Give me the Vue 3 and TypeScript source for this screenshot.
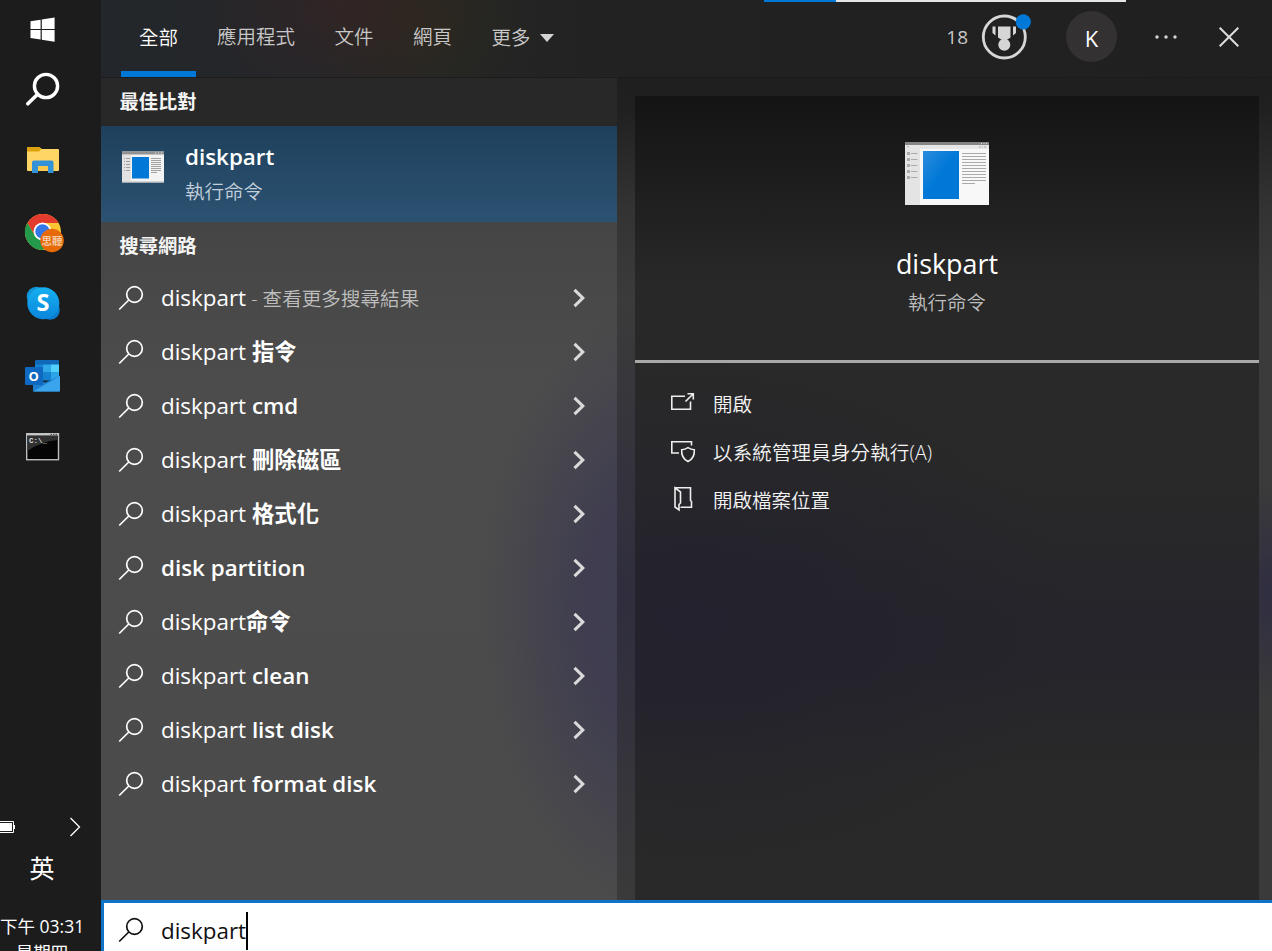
<script setup lang="ts">
interface Suggestion {
  plain: string
  bold: string
  note?: string
}

const tabs: string[] = ['全部', '應用程式', '文件', '網頁']

const suggestions: Suggestion[] = [
  { plain: 'diskpart', bold: '', note: ' - 查看更多搜尋結果' },
  { plain: 'diskpart ', bold: '指令' },
  { plain: 'diskpart ', bold: 'cmd' },
  { plain: 'diskpart ', bold: '刪除磁區' },
  { plain: 'diskpart ', bold: '格式化' },
  { plain: '', bold: 'disk partition' },
  { plain: 'diskpart', bold: '命令' },
  { plain: 'diskpart ', bold: 'clean' },
  { plain: 'diskpart ', bold: 'list disk' },
  { plain: 'diskpart ', bold: 'format disk' },
]
</script>

<template>
  <div class="screen">
    <aside class="taskbar">
      <svg class="tb-icon win" width="26" height="26" viewBox="0 0 26 26">
        <path d="M0.5 4.2 10.6 2.7V12H0.5zM11.8 2.5 24.6 0.6V12H11.8zM0.5 13.1H10.6V22.5L0.5 21.1zM11.8 13.1H24.6V24.8L11.8 22.8z" fill="#fff" />
      </svg>
      <svg class="tb-icon find" width="36" height="36" viewBox="0 0 36 36" fill="none" stroke="#fff">
        <circle cx="21" cy="14" r="11.6" stroke-width="3.4" />
        <path d="M12.6 22.2 2.8 31.8" stroke-width="3.6" stroke-linecap="round" />
      </svg>
      <svg class="tb-icon folder" width="34" height="28" viewBox="0 0 34 28">
        <path d="M1 2q0-1 1-1h11l3 2h16q1 0 1 1v20q0 1-1 1H2q-1 0-1-1z" fill="#ffd665" />
        <path d="M1 2q0-1 1-1h11l2.400 2L13 5.400H1z" fill="#dda10d" />
        <path d="M6 16.500q0-2 2-2h17.500q2 0 2 2V27H22v-7H12v7H6z" fill="#3292d8" />
        <path d="M12 20h10v4.800H12z" fill="#f8c84b" />
      </svg>
      <svg class="tb-icon chrome" width="40" height="40" viewBox="0 0 40 40">
        <circle cx="19" cy="19" r="18" fill="#fbc534" />
        <path d="M19 10h15.600A18 18 0 0 0 3.400 10L11 23z" fill="#e33b2e" />
        <path d="M3.400 10A18 18 0 0 0 19 37l8-13-8 4-8-5z" fill="#239a4b" />
        <circle cx="18.500" cy="18.500" r="9" fill="#fff" />
        <circle cx="18.500" cy="18.500" r="7.200" fill="#3478e8" />
        <circle cx="28" cy="27.500" r="11.800" fill="#e66b08" />
        <text x="28" y="31.500" text-anchor="middle" font-size="10.500" font-weight="700" fill="#f7c9a3" font-family="Noto Sans CJK TC">思聽</text>
      </svg>
      <svg class="tb-icon skype" width="36" height="36" viewBox="0 0 36 36">
        <defs>
          <linearGradient id="cloud" x1="0" y1="0" x2="0" y2="1">
            <stop offset="0" stop-color="#16b0f0" /><stop offset="1" stop-color="#0a86dc" />
          </linearGradient>
        </defs>
        <circle cx="10.500" cy="10.500" r="9.800" fill="#1294d8" />
        <circle cx="24" cy="24" r="9.800" fill="#0a7dd0" />
        <circle cx="17.300" cy="17.300" r="16" fill="url(#cloud)" />
        <text x="17" y="25" text-anchor="middle" font-size="23.500" font-weight="700" fill="#fff" font-family="Open Sans">S</text>
      </svg>
      <svg class="tb-icon outlook" width="38" height="34" viewBox="0 0 38 34">
        <path d="M11 2q0-1 1-1h22q1 0 1 1v18H11z" fill="#1068b8" />
        <path d="M11 5.500h8v8h-8z" fill="#1482d0" />
        <path d="M19 5.500h8v8h-8z" fill="#30a8e8" />
        <path d="M27 5.500h8v8h-8z" fill="#50d0fa" />
        <path d="M19 13.500h8v8h-8z" fill="#1482d0" />
        <path d="M27 13.500h8v8h-8z" fill="#2ca5e8" />
        <path d="M9 18 21 23.500 36 17V31.500q0 1-1 1H10q-1 0-1-1z" fill="#1c7fd0" />
        <path d="M9 32.500 36 17V31.500q0 1-1 1z" fill="#3aa4ec" />
        <rect x="1" y="8" width="18" height="18" rx="1.300" fill="#0f69c3" />
        <text x="9.700" y="21.500" text-anchor="middle" font-size="13" font-weight="700" fill="#fff" font-family="Open Sans">O</text>
      </svg>
      <svg class="tb-icon cmd" width="34" height="28" viewBox="0 0 34 28">
        <rect x="0.700" y="0.700" width="31.800" height="26" fill="#050505" stroke="#bdbdbd" stroke-width="1.400" />
        <path d="M1.400 2H32v5Q16 8 1.400 18z" fill="#303030" />
        <path d="M1 1.500H32" stroke="#c9c9c9" stroke-width="1.800" />
        <path d="M24.500 1.400h1.500m1 0h1.500m1 0h1.500" stroke="#444" />
        <text x="3" y="10" font-size="7.500" font-weight="700" fill="#ddd" font-family="Liberation Mono">C:\_</text>
      </svg>
      <div class="tray">
        <svg width="16" height="14" viewBox="0 0 16 14">
          <path d="M-1 1.500H13.500V12.500H-1M14.500 5v4" fill="none" stroke="#fff" />
          <path d="M0 3h12v8H0z" fill="#fff" />
        </svg>
        <svg width="14" height="20" viewBox="0 0 14 20">
          <path d="M1.500 1 10.500 10 1.500 19" fill="none" stroke="#fff" stroke-width="1.300" />
        </svg>
      </div>
      <div class="ime">英</div>
      <div class="clock">下午 03:31</div>
      <div class="day">星期四</div>
    </aside>

    <main class="flyout">
      <header class="topbar">
        <nav class="tabs">
          <span v-for="(tab, i) in tabs" :key="tab" class="tab" :class="{ active: i === 0 }">{{ tab }}</span>
          <span class="tab more">更多<i class="caret"></i></span>
        </nav>
        <div class="progress"><i></i></div>
        <div class="account">
          <span class="points">18</span>
          <svg class="medal" width="50" height="50" viewBox="0 0 50 50">
            <circle cx="23.300" cy="25" r="21" fill="none" stroke="#d6d6d6" stroke-width="2.800" />
            <path d="M17 14.500H29.500V25.500L26 27.700H20.500L17 25.500z" fill="#d6d6d6" />
            <circle cx="23.300" cy="32.800" r="6" fill="#d6d6d6" />
            <path d="M11.500 14.500h3v9l-3-2.500zM32 14.500h3v6.500l-3 2.500z" fill="#d6d6d6" />
            <circle cx="42.300" cy="9.800" r="7.600" fill="#0078d7" />
          </svg>
          <span class="avatar">K</span>
          <svg class="dots" width="24" height="6" viewBox="0 0 24 6" fill="#d6d6d6">
            <circle cx="3" cy="3" r="1.700" /><circle cx="12" cy="3" r="1.700" /><circle cx="21" cy="3" r="1.700" />
          </svg>
          <svg class="close" width="22" height="22" viewBox="0 0 22 22">
            <path d="M1.700 1.700 20.300 20.300M20.300 1.700 1.700 20.300" stroke="#ddd" stroke-width="2" />
          </svg>
        </div>
      </header>

      <div class="body">
        <section class="results">
          <h2 class="heading first">最佳比對</h2>
          <div class="best">
            <svg width="42" height="32" viewBox="0 0 42 32">
              <rect width="42" height="31" y="0.500" fill="#f3f3f3" />
              <path d="M0 4h9v26H0z" fill="#e2e2e2" />
              <path d="M0 0.500h42v3H0z" fill="#929292" />
              <path d="M0 31H42" stroke="#b5b5b5" />
              <path d="M33 2h1m2 0h1m2 0h1" stroke="#eee" />
              <rect x="10" y="6" width="17" height="21.500" fill="#0078d7" />
              <path d="M2 7.500h1m1 0h4M2 10.500h1m1 0h4M2 13.500h1m1 0h4M2 16.500h1m1 0h4M2 19.500h1m1 0h4M29 7.500h10M29 9.500h10M29 11.500h10M29 13.500h10M29 15.500h10M29 17.500h10M29 19.500h10M29 21.500h6" stroke="#a0a0a0" />
            </svg>
            <div class="best-text">
              <b>diskpart</b>
              <span>執行命令</span>
            </div>
          </div>
          <h2 class="heading">搜尋網路</h2>
          <ul class="list">
            <li v-for="(s, i) in suggestions" :key="i" class="row">
              <svg class="glass" width="26" height="26" viewBox="0 0 26 26" fill="none" stroke="#fff" stroke-width="1.700">
                <circle cx="16.500" cy="9.500" r="7.800" /><path d="M10.800 15 1.200 24.500" />
              </svg>
              <span class="query">{{ s.plain }}<b v-if="s.bold">{{ s.bold }}</b><small v-if="s.note">{{ s.note }}</small></span>
              <svg class="chev" width="14" height="20" viewBox="0 0 14 20">
                <path d="M2.500 1.800 10.800 10 2.500 18.200" fill="none" stroke="#dadada" stroke-width="3.100" />
              </svg>
            </li>
          </ul>
        </section>

        <section class="side">
          <div class="card">
            <div class="hero">
              <svg width="84" height="63" viewBox="0 0 84 63">
                <defs>
                  <linearGradient id="sheet" x1="0" y1="0" x2="1" y2="1">
                    <stop offset="0" stop-color="#2a8cdc" /><stop offset="0.500" stop-color="#0078d7" />
                  </linearGradient>
                </defs>
                <rect width="84" height="63" fill="#f8f8f8" />
                <path d="M0 7h15v56H0z" fill="#e4e4e4" />
                <path d="M0 3h84v4H0z" fill="#e6e6e6" />
                <path d="M0 0h84v3H0z" fill="#858585" />
                <path d="M76 1.500h1m1.500 0h1m1.500 0h1" stroke="#ddd" />
                <path d="M2 4.800h2M74 5h2m1 0h1m1 0h2" stroke="#aaa" />
                <rect x="18" y="9" width="36" height="48" fill="url(#sheet)" />
                <path d="M2 11.500h3M2 17.500h3M2 23.500h3M2 29.500h3M2 35.500h3" stroke="#aaa" stroke-width="3" />
                <path d="M6 11.500h6.500M6 17.500h6.500M6 23.500h6.500M6 29.500h6.500M6 35.500h6.500M57 11.500h24M57 14.500h24M57 17.500h24M57 20.500h24M57 23.500h24M57 26.500h24M57 29.500h24M57 32.500h24M57 35.500h24M57 38.500h24M57 41.500h13" stroke="#aaa" />
              </svg>
              <h1>diskpart</h1>
              <p>執行命令</p>
            </div>
            <ul class="actions">
              <li>
                <svg width="26" height="24" viewBox="0 0 26 24" fill="none" stroke="#eee" stroke-width="1.600">
                  <path d="M15 4.300H1.800v13h18.700V9.500M15.500 9.500 22.500 2.500M17.500 1.800h5.800V7.500" />
                </svg>
                <span>開啟</span>
              </li>
              <li>
                <svg width="26" height="24" viewBox="0 0 26 24" fill="none" stroke="#eee" stroke-width="1.600">
                  <path d="M9 13H1.800V1.800H21.500V5.500" />
                  <path d="M18 7.700q3 2 6.300 2Q25 18 18 21.500q-7-3.500-6.300-11.800 3.300 0 6.300-2z" />
                </svg>
                <span class="admin">以系統管理員身分執行(A)</span>
              </li>
              <li>
                <svg class="place" width="26" height="26" viewBox="0 0 26 26" fill="none" stroke="#eee" stroke-width="1.600">
                  <path d="M5 1.800H20.500V14.500l1 1v5.700H10.500M5 1.800V21l4 3V18.500l1.500-1.500V6z" />
                </svg>
                <span>開啟檔案位置</span>
              </li>
            </ul>
          </div>
        </section>
      </div>

      <footer class="searchbox">
        <svg class="glass" width="26" height="26" viewBox="0 0 26 26" fill="none" stroke="#111" stroke-width="1.700">
          <circle cx="16.500" cy="9.500" r="7.800" /><path d="M10.800 15 1.200 24.500" />
        </svg>
        <span class="typed">diskpart</span><i class="cursor"></i>
      </footer>
    </main>
  </div>
</template>

<style>
html, body { margin: 0; overflow: hidden; background: #1c1c1c; }
</style>

<style scoped>
* { box-sizing: border-box; }
.screen { display: flex; width: 1272px; height: 951px; overflow: hidden; color: #fff; font-family: "Open Sans", "Noto Sans CJK TC", sans-serif; }
h1, h2, p, ul { margin: 0; padding: 0; font-weight: 400; list-style: none; }
svg { display: block; flex: none; }
.taskbar { width: 101px; height: 951px; flex: none; background: #1c1c1c; display: flex; flex-direction: column; overflow: hidden; }
.tb-icon { margin-left: 25px; }
.win { margin-left: 30px; margin-top: 17px; }
.find { margin-top: 29px; margin-left: 25px; }
.folder { margin-top: 38px; margin-left: 26px; }
.chrome { margin-top: 39px; margin-left: 24px; }
.skype { margin-top: 33px; margin-left: 26px; }
.outlook { margin-top: 37px; margin-left: 24px; }
.cmd { margin-top: 40px; margin-left: 25.500px; }
.tray { margin-top: 356px; height: 20px; display: flex; align-items: center; justify-content: space-between; padding-right: 18px; }
.ime { margin-top: 17px; width: 84px; height: 28px; line-height: 28px; text-align: center; font-size: 25px; }
.clock { margin-top: 32px; height: 24px; line-height: 24px; font-size: 17.500px; white-space: nowrap; width: 84px; text-align: center; }
.day { width: 84px; margin-top: 1px; height: 26px; line-height: 26px; text-align: center; font-size: 17.500px; white-space: nowrap; flex: none; }

.flyout { flex: 1; min-width: 0; display: flex; flex-direction: column; }
.topbar { height: 78px; position: relative; display: flex; justify-content: space-between; font-family: "Noto Sans CJK TC", sans-serif;
  background: radial-gradient(ellipse 150px 110px at 240px 0, rgba(70, 30, 30, .35), transparent), radial-gradient(ellipse 120px 110px at 325px 20px, rgba(54, 48, 14, .3), transparent), linear-gradient(90deg, #23262a 0, #25272a 240px, #222 500px, #202020 100%); border-bottom: 1px solid #1c1c1c; }
.tabs { display: flex; padding-left: 20px; }
.tab { height: 77px; line-height: 71px; font-size: 19.500px; font-weight: 350; color: #c8c8c8; margin-right: 39.500px; }
.tab.active { width: 75px; line-height: 73px; text-align: center; color: #fff; border-bottom: 6px solid #0078d7; margin-right: 21px; }
.more { display: flex; align-items: center; height: 73px; }
.caret { margin-left: 9px; margin-top: 2px; border: 7.500px solid transparent; border-top: 8px solid #d4d4d4; border-bottom: 0; }
.progress { position: absolute; left: 663px; top: 0; width: 362px; height: 2px; background: #e6e6e6; }
.progress i { display: block; height: 2px; width: 72px; background: #0078d7; }
.account { display: flex; align-items: center; padding-right: 32px; height: 74px; }
.points { font-family: "Open Sans", sans-serif; font-size: 19px; color: #c8c8c8; font-weight: 400; }
.medal { margin-left: 13px; }
.avatar { margin-left: 35px; margin-top: -2px; width: 51px; height: 51px; border-radius: 50%; background: #343132; text-align: center; font: 400 22px/54px "Open Sans", sans-serif; }
.dots { margin-left: 37px; }
.close { margin-left: 40px; }

.body { display: flex; height: 822px; }
.results { width: 516px; flex: none; background: radial-gradient(ellipse 170px 300px at 550px 530px, rgba(60, 58, 80, .85) 0, rgba(60, 58, 80, .8) 40%, transparent), linear-gradient(#3c3c3c 0, #464646 160px, #4c4c4c 300px, #4b4b4b 100%); }
.heading { height: 48px; line-height: 46px; padding-left: 18.500px; font-family: "Noto Sans CJK TC", sans-serif; font-size: 19.300px; font-weight: 700; color: #f4f4f4; }
.heading.first { background: #282828; }
.best { height: 96px; display: flex; padding: 25px 0 0 21px; background: linear-gradient(#1e405c, #2c5272); }
.best-text { margin-left: 21px; margin-top: -12px; display: flex; flex-direction: column; }
.best-text b { font-weight: 600; font-size: 22.400px; line-height: 36px; }
.best-text span { font-family: "Noto Sans CJK TC", sans-serif; font-size: 19.500px; font-weight: 350; line-height: 31px; color: #c3d0da; }
.list { margin-top: 1px; }
.row { height: 54px; display: flex; align-items: center; padding: 0 31px 0 17px; }
.glass { margin-top: -1px; }
.query { flex: 1; margin-left: 17px; font-size: 22.400px; line-height: 30px; white-space: pre; }
.query b { font-weight: 600; }
.query small { font-size: 19.600px; font-weight: 350; color: #bebebe; }

.side { flex: 1; padding: 18px 13px 0 18px; background: radial-gradient(ellipse 200px 300px at 0 520px, rgba(46, 44, 62, .9), transparent), radial-gradient(ellipse 60px 110px at 100% 515px, rgba(46, 44, 66, .9), transparent), linear-gradient(#1f1f1f 0, #202020 30px, #333 130px, #3b3b3b 220px, #3a3a3a 820px); }
.card { height: 804px; background: radial-gradient(ellipse 380px 260px at 60px 520px, rgba(34, 33, 46, .8), transparent), linear-gradient(#292929 380px, #26252b 520px, #26252b 570px, #292929 680px); }
.hero { height: 267px; border-bottom: 3px solid #a8a8a8; background: linear-gradient(#141414, #282828 70%); display: flex; flex-direction: column; align-items: center; padding-top: 46px; }
h1 { margin-top: 39px; font-size: 26.900px; line-height: 40px; }
.hero p { font-family: "Noto Sans CJK TC", sans-serif; font-weight: 350; font-size: 19.500px; line-height: 28px; margin-top: 4px; color: #bebebe; }
.actions { padding: 17px 0 0 35px; }
.actions li { height: 48px; display: flex; align-items: center; }
.actions span { margin-left: 17px; margin-top: 1px; font-size: 19.500px; font-weight: 350; line-height: 28px; white-space: nowrap; color: #f4f4f4; }
.actions .admin { letter-spacing: .15px; }
.place { margin-top: -3px; }

.searchbox { height: 51px; flex: none; background: #fff; color: #111; border-left: 3px solid #0f74c8; border-top: 3px solid #0f74c8; display: flex; align-items: center; padding: 7px 0 0 14px; }
.typed { margin-left: 17px; font-size: 22.400px; line-height: 30px; }
.cursor { width: 2px; height: 38px; background: #000; }
</style>
